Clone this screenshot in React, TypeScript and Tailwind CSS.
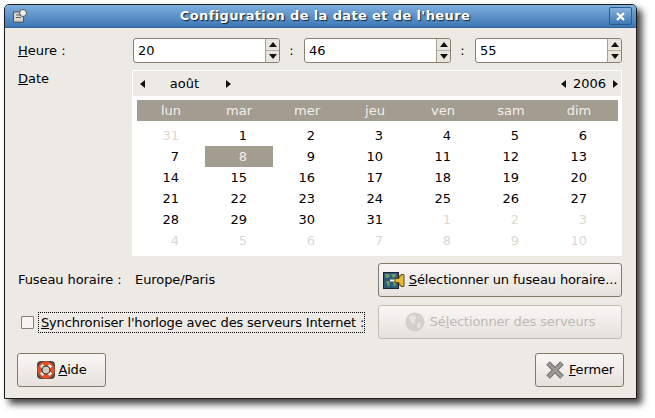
const weekDays = ["lun", "mar", "mer", "jeu", "ven", "sam", "dim"];

// first and last rows hold days of the other months
const days = [
  31, 1, 2, 3, 4, 5, 6, 7, 8, 9, 10, 11, 12, 13, 14, 15, 16, 17, 18, 19, 20, 21, 22, 23, 24, 25, 26, 27, 28, 29, 30, 31,
  1, 2, 3, 4, 5, 6, 7, 8, 9, 10,
];

function Spin({ value }: { value: string }) {
  return (
    <div className="flex h-[25px] w-[147px] rounded-[3px] border border-[#8a7f70] bg-white">
      <div className="flex-1 pl-[4px] text-[13px] leading-[23px] text-black">{value}</div>
      <div className="flex w-[14px] flex-col rounded-r-[3px] border-l border-[#a79f92] bg-[#e8e4de]">
        <div className="flex flex-1 items-center justify-center border-b border-[#b9b1a5]">
          <svg width="8" height="5" viewBox="0 0 8 5"><path d="M4 0 8 5H0z" fill="#111" /></svg>
        </div>
        <div className="flex flex-1 items-center justify-center">
          <svg width="8" height="5" viewBox="0 0 8 5"><path d="M0 0H8L4 5z" fill="#111" /></svg>
        </div>
      </div>
    </div>
  );
}

function Arrow({ left }: { left?: boolean }) {
  return (
    <svg width="5" height="8" viewBox="0 0 5 8">
      <path d={left ? "M5 0V8L0 4z" : "M0 0V8L5 4z"} fill="#111" />
    </svg>
  );
}

function Calendar() {
  return (
    <div className="h-[186px] w-[490px] border border-white">
      <div className="flex h-[25px] items-center bg-[#edeae6] text-[13px] text-black">
        <div className="ml-[7px]"><Arrow left /></div>
        <span className="ml-[17px] w-[45px] text-center">août</span>
        <div className="ml-[19px]"><Arrow /></div>
        <div className="ml-auto mr-[3px] flex items-center">
          <Arrow left />
          <span className="mx-[7px]">2006</span>
          <Arrow />
        </div>
      </div>
      <div className="h-[159px] bg-white px-[4px] pt-[4px]">
        <div className="grid h-[21px] w-[481px] grid-cols-[repeat(7,68px)] bg-[#a39c91] text-center text-[13px] leading-[21px] text-[#f2efeb]">
          {weekDays.map((d) => (
            <div key={d}>{d}</div>
          ))}
        </div>
        <div className="mt-[4px] grid grid-cols-[repeat(7,68px)] auto-rows-[21px] text-right text-[13px] leading-[21px]">
          {days.map((d, i) => {
            const other = i === 0 || i >= 32;
            const sel = i === 8;
            return (
              <div
                key={i}
                className={
                  sel
                    ? "bg-[#a39c91] pr-[26px] text-[#f2efeb]"
                    : other
                      ? "pr-[26px] text-[#ddd7d1]"
                      : "pr-[26px] text-black"
                }
              >
                {d}
              </div>
            );
          })}
        </div>
      </div>
    </div>
  );
}

function MapIcon() {
  return (
    <svg width="22" height="17" viewBox="0 0 22 17">
      <rect x="0.500" y="0.500" width="15" height="16" fill="#2f5a78" stroke="#18242e" />
      <path d="M2 2h4l1 2-2 2H3zM8 2h5v2l-3 2zM3 9h3l1 3-2 3zM10 10h3v3l-2 2z" fill="#6d9a62" />
      <path d="M7 8.500h5" stroke="#f4f1e4" strokeWidth="2" />
      <path d="M12 6.500h4v-2.500h2v-1.500h3v12h-3V13h-2v-2.500h-4z" fill="#e3bb35" stroke="#54430f" strokeWidth="0.900" />
    </svg>
  );
}

function GlobeIcon() {
  return (
    <svg width="20" height="20" viewBox="0 0 20 20">
      <circle cx="10" cy="10" r="9.500" fill="#d2cfcb" />
      <path d="M4 5c3-3 6-2 7 0s-2 3-1 5-3 2-4 0-3-3-2-5zM13 11c2-1 4 0 3 2s-2 4-3 3-1-4 0-5z" fill="#e6e3df" />
    </svg>
  );
}

function LifebuoyIcon() {
  return (
    <svg width="20" height="20" viewBox="0 0 20 20">
      <rect x="1" y="1" width="18" height="18" rx="4" fill="#4a4642" />
      <circle cx="10" cy="10" r="6.500" fill="none" stroke="#e0502a" strokeWidth="4.500" />
      <path d="M5.200 5.200 7.600 7.600M14.800 5.200l-2.400 2.400M5.200 14.800l2.400-2.400M14.800 14.800l-2.400-2.400" stroke="#f4f1ee" strokeWidth="3.500" />
      <circle cx="10" cy="10" r="4" fill="#cfcac4" stroke="#3a3633" />
    </svg>
  );
}

function CloseIcon() {
  return (
    <svg width="20" height="20" viewBox="0 0 20 20">
      <path d="M3 3 17 17M17 3 3 17" stroke="#6f6f6b" strokeWidth="5" />
      <path d="M3 3 17 17M17 3 3 17" stroke="#9a9a96" strokeWidth="3" />
    </svg>
  );
}

function Button({ className, disabled, children }: { className: string; disabled?: boolean; children: React.ReactNode }) {
  return (
    <button
      className={
        "flex h-[34px] items-center justify-center rounded-[3px] border bg-gradient-to-b from-[#f9f7f5] to-[#e6e1dc] text-[13px] tracking-[-0.13px] " +
        (disabled ? "border-[#c6bdb0] text-[#bdb9b4] " : "border-[#85796a] text-black ") +
        className
      }
    >
      {children}
    </button>
  );
}

export default function App() {
  return (
    <div className="h-[418px] w-[655px] bg-white pl-[4px] pt-[4px] font-['DejaVu_Sans',sans-serif]">
      <div className="h-[395px] w-[633px] rounded-t-[5px] border border-[#1c1c1c] bg-[#edeae6] shadow-[5px_5px_7px_rgba(0,0,0,0.75)]">
        {/* title bar */}
        <div className="flex h-[23px] items-center rounded-t-[4px] border-b border-[#2f6398] bg-gradient-to-b from-[#7fafde] to-[#3c77b4] pl-[8px] pr-[4px]">
          <svg width="14" height="14" viewBox="0 0 14 14">
            <rect x="0.500" y="3" width="10" height="10" fill="#d8d4cc" stroke="#555" />
            <circle cx="10" cy="4" r="3.500" fill="#eee" stroke="#555" />
            <path d="M3 6h5M3 8.500h5" stroke="#666" />
          </svg>
          <div className="flex-1 pl-[14px] text-center text-[13px] font-bold tracking-[0.37px] text-white [text-shadow:1px_1px_1px_#123]">
            Configuration de la date et de l'heure
          </div>
          <div className="flex h-[18px] w-[23px] items-center justify-center rounded-[2px] border border-[#2c5a8c] bg-gradient-to-b from-[#86b3de] to-[#3f78b2]">
            <svg width="9" height="9" viewBox="0 0 9 9">
              <path d="M1 1 8 8M8 1 1 8" stroke="#fff" strokeWidth="2.200" />
            </svg>
          </div>
        </div>

        <div className="flex flex-col pl-[13px] pr-[14px] pt-[10px]">
          <div className="flex h-[25px] items-center text-[13px] text-black">
            <span className="w-[115px]"><u>H</u>eure :</span>
            <Spin value="20" />
            <span className="w-[24px] pr-[1px] text-center">:</span>
            <Spin value="46" />
            <span className="w-[24px] pr-[1px] text-center">:</span>
            <Spin value="55" />
          </div>

          <div className="mt-[7px] flex text-[13px] text-black">
            <span className="-mt-[1px] w-[114px]"><u>D</u>ate</span>
            <Calendar />
          </div>

          <div className="mt-[7px] flex h-[34px] items-center text-[13px] text-black">
            <span className="w-[117px] tracking-[-0.08px]">Fuseau horaire :</span>
            <span className="tracking-[-0.08px]">Europe/Paris</span>
            <Button className="ml-auto w-[244px] gap-[4px]">
              <MapIcon />
              <span><u>S</u>électionner un fuseau horaire...</span>
            </Button>
          </div>

          <div className="mt-[8px] flex h-[34px] items-center text-[13px] text-black">
            <div className="ml-[3px] h-[13px] w-[13px] rounded-[1px] border border-[#8a7f70] bg-[#f6f4f2]" />
            <span className="ml-[4px] h-[21px] w-[327px] whitespace-nowrap border border-dotted border-black pl-[2px] leading-[19px] tracking-[-0.17px]">
              <u>S</u>ynchroniser l'horloge avec des serveurs Internet :
            </span>
            <Button disabled className="ml-auto w-[244px] gap-[5px]">
              <GlobeIcon />
              <span>Sé<u>l</u>ectionner des serveurs</span>
            </Button>
          </div>

          <div className="mt-[14px] flex justify-between">
            <Button className="-ml-[1px] w-[89px] gap-[2px]">
              <LifebuoyIcon />
              <span><u>A</u>ide</span>
            </Button>
            <Button className="-mr-[2px] w-[89px] gap-[4px]">
              <CloseIcon />
              <span><u>F</u>ermer</span>
            </Button>
          </div>
        </div>
      </div>
    </div>
  );
}
